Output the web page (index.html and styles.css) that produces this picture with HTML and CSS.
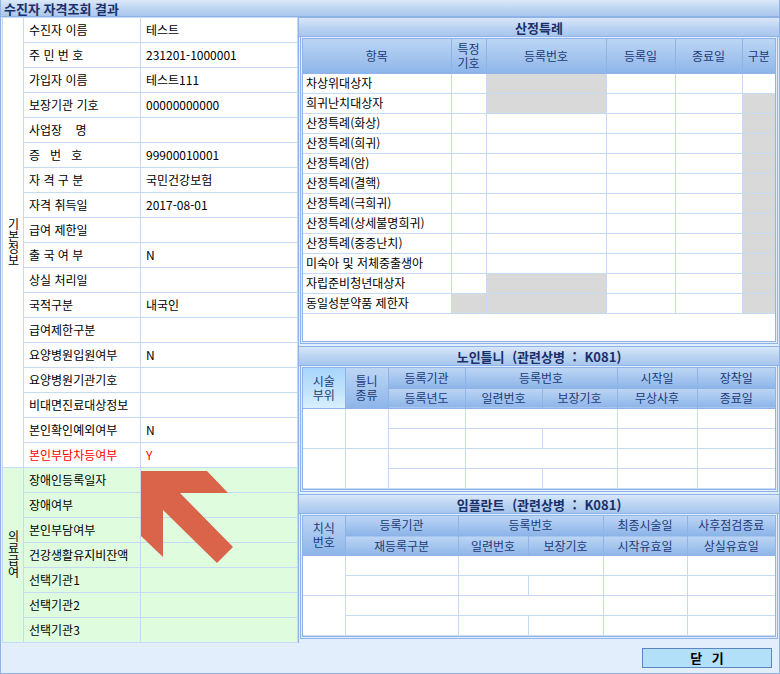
FILE: index.html
```html
<!DOCTYPE html>
<html lang="ko">
<head>
  <meta charset="UTF-8">
  <title>수진자 자격조회 결과</title>
  <link rel="stylesheet" href="styles.css">
</head>
<body>
  <div class="window">
    <div class="titlebar">수진자 자격조회 결과</div>

    <div class="main">
      <!-- 기본정보 / 의료급여 -->
      <div class="left-panel">
        <table class="info">
          <colgroup><col class="c-group"><col class="c-label"><col class="c-value"></colgroup>
          <tr><td class="group" rowspan="18"><span>기본정보</span></td><td class="label">수진자 이름</td><td>테스트</td></tr>
          <tr><td class="label">주 민 번 호</td><td>231201-1000001</td></tr>
          <tr><td class="label">가입자 이름</td><td>테스트111</td></tr>
          <tr><td class="label">보장기관 기호</td><td>00000000000</td></tr>
          <tr><td class="label">사업장&nbsp;&nbsp;&nbsp;&nbsp;명</td><td></td></tr>
          <tr><td class="label">증&nbsp;&nbsp;&nbsp;번&nbsp;&nbsp;&nbsp;호</td><td>99900010001</td></tr>
          <tr><td class="label">자 격 구 분</td><td>국민건강보험</td></tr>
          <tr><td class="label">자격 취득일</td><td>2017-08-01</td></tr>
          <tr><td class="label">급여 제한일</td><td></td></tr>
          <tr><td class="label">출 국 여 부</td><td>N</td></tr>
          <tr><td class="label">상실 처리일</td><td></td></tr>
          <tr><td class="label">국적구분</td><td>내국인</td></tr>
          <tr><td class="label">급여제한구분</td><td></td></tr>
          <tr><td class="label">요양병원입원여부</td><td>N</td></tr>
          <tr><td class="label">요양병원기관기호</td><td></td></tr>
          <tr><td class="label">비대면진료대상정보</td><td></td></tr>
          <tr><td class="label">본인확인예외여부</td><td>N</td></tr>
          <tr class="alert"><td class="label">본인부담차등여부</td><td>Y</td></tr>
          <tr class="aid"><td class="group" rowspan="7"><span>의료급여</span></td><td class="label">장애인등록일자</td><td></td></tr>
          <tr class="aid"><td class="label">장애여부</td><td></td></tr>
          <tr class="aid"><td class="label">본인부담여부</td><td></td></tr>
          <tr class="aid"><td class="label">건강생활유지비잔액</td><td></td></tr>
          <tr class="aid"><td class="label">선택기관1</td><td></td></tr>
          <tr class="aid"><td class="label">선택기관2</td><td></td></tr>
          <tr class="aid"><td class="label">선택기관3</td><td></td></tr>
        </table>
      </div>

      <div class="right-panel">
        <!-- 산정특례 -->
        <section class="sec">
          <div class="sec-head">산정특례</div>
          <div class="sec-body">
            <div class="sec-inner tall">
              <table class="grid">
                <colgroup><col style="width:148px"><col style="width:35px"><col style="width:120px"><col style="width:69px"><col style="width:67px"><col style="width:33px"></colgroup>
                <tr class="head-one">
                  <th>항목</th><th class="tight">특정<br>기호</th><th>등록번호</th><th>등록일</th><th>종료일</th><th>구분</th>
                </tr>
                <tr><td class="name">차상위대상자</td><td></td><td class="off"></td><td></td><td></td><td></td></tr>
                <tr><td class="name">희귀난치대상자</td><td></td><td class="off"></td><td></td><td></td><td class="off"></td></tr>
                <tr><td class="name">산정특례(화상)</td><td></td><td></td><td></td><td></td><td class="off"></td></tr>
                <tr><td class="name">산정특례(희귀)</td><td></td><td></td><td></td><td></td><td class="off"></td></tr>
                <tr><td class="name">산정특례(암)</td><td></td><td></td><td></td><td></td><td class="off"></td></tr>
                <tr><td class="name">산정특례(결핵)</td><td></td><td></td><td></td><td></td><td class="off"></td></tr>
                <tr><td class="name">산정특례(극희귀)</td><td></td><td></td><td></td><td></td><td class="off"></td></tr>
                <tr><td class="name">산정특례(상세불명희귀)</td><td></td><td></td><td></td><td></td><td class="off"></td></tr>
                <tr><td class="name">산정특례(중증난치)</td><td></td><td></td><td></td><td></td><td class="off"></td></tr>
                <tr><td class="name">미숙아 및 저체중출생아</td><td></td><td></td><td></td><td></td><td class="off"></td></tr>
                <tr><td class="name">자립준비청년대상자</td><td></td><td class="off"></td><td></td><td></td><td class="off"></td></tr>
                <tr><td class="name">동일성분약품 제한자</td><td class="off"></td><td class="off"></td><td></td><td></td><td class="off"></td></tr>
              </table>
            </div>
          </div>
        </section>

        <!-- 노인틀니 -->
        <section class="sec">
          <div class="sec-head">노인틀니 (관련상병 : K081)</div>
          <div class="sec-body">
            <div class="sec-inner">
              <table class="grid">
                <colgroup><col style="width:42px"><col style="width:43px"><col style="width:77px"><col style="width:77px"><col style="width:75px"><col style="width:80px"><col style="width:78px"></colgroup>
                <tr class="head-two">
                  <th rowspan="2" class="tight picked">시술<br>부위</th><th rowspan="2" class="tight">틀니<br>종류</th>
                  <th>등록기관</th><th colspan="2">등록번호</th><th>시작일</th><th>장착일</th>
                </tr>
                <tr class="head-two"><th>등록년도</th><th>일련번호</th><th>보장기호</th><th>무상사후</th><th>종료일</th></tr>
                <tr><td rowspan="2"></td><td rowspan="2"></td><td></td><td colspan="2"></td><td></td><td></td></tr>
                <tr><td></td><td></td><td></td><td></td><td></td></tr>
                <tr><td rowspan="2"></td><td rowspan="2"></td><td></td><td colspan="2"></td><td></td><td></td></tr>
                <tr><td></td><td></td><td></td><td></td><td></td></tr>
              </table>
            </div>
          </div>
        </section>

        <!-- 임플란트 -->
        <section class="sec">
          <div class="sec-head">임플란트 (관련상병 : K081)</div>
          <div class="sec-body">
            <div class="sec-inner">
              <table class="grid">
                <colgroup><col style="width:42px"><col style="width:113px"><col style="width:70px"><col style="width:75px"><col style="width:84px"><col style="width:88px"></colgroup>
                <tr class="head-two">
                  <th rowspan="2" class="tight">치식<br>번호</th>
                  <th>등록기관</th><th colspan="2">등록번호</th><th>최종시술일</th><th>사후점검종료</th>
                </tr>
                <tr class="head-two"><th>재등록구분</th><th>일련번호</th><th>보장기호</th><th>시작유효일</th><th>상실유효일</th></tr>
                <tr><td rowspan="2"></td><td></td><td colspan="2"></td><td></td><td></td></tr>
                <tr><td></td><td></td><td></td><td></td><td></td></tr>
                <tr><td rowspan="2"></td><td></td><td colspan="2"></td><td></td><td></td></tr>
                <tr><td></td><td></td><td></td><td></td><td></td></tr>
              </table>
            </div>
          </div>
        </section>
      </div>
    </div>

    <div class="footer">
      <button type="button" class="btn-close">닫 기</button>
    </div>

    <!-- pointer arrow over the table -->
    <svg class="arrow" width="780" height="674" viewBox="0 0 780 674">
      <polygon points="141,471 207,471 228,493 180,493 233,547 217,563 163,510 163,557 141,536" fill="#d9644a"/>
    </svg>
  </div>
</body>
</html>
```

FILE: styles.css
```css
/* Global */
* {
  box-sizing: border-box;
}

body {
  margin: 0;
  font-family: "Noto Sans CJK KR", "Noto Sans", sans-serif;
  font-size: 12px;
  color: #000;
  background: #e2eefb;
}

.window {
  position: relative;
  width: 780px;
  height: 674px;
  background: #e2eefb;
  border: 1px solid #8fb3e6;
  border-top: none;
  display: flex;
  flex-direction: column;
}

/* Title */
.titlebar {
  height: 17px;
  padding-left: 3px;
  line-height: 17px;
  font-size: 13px;
  font-weight: bold;
  color: #1b2f6b;
  background: linear-gradient(180deg, #dbe8f8 0%, #c2d8f3 45%, #a9c7ee 100%);
  border-bottom: 1px solid #8fb3e6;
}

.main {
  display: flex;
  padding-left: 1px;
  gap: 1px;
}

/* Left info table */
.left-panel {
  width: 295px;
}

.info {
  width: 295px;
  table-layout: fixed;
  border-collapse: collapse;
  border: 1px solid #8fb3e6;
  background: #fff;
}

.info .c-group { width: 21px; }
.info .c-label { width: 117px; }
.info .c-value { width: 157px; }

.info td {
  height: 25px;
  padding: 0 0 0 5px;
  border: 1px solid #c6dbf3;
  line-height: 14px;
  white-space: nowrap;
  overflow: hidden;
}

.info td.group {
  padding: 0;
  text-align: center;
  vertical-align: middle;
}

.info td.group span {
  display: inline-block;
  writing-mode: vertical-rl;
  text-orientation: upright;
  font-size: 12px;
  line-height: 14px;
  letter-spacing: 0;
}

.info tr.alert td {
  color: #f00;
}

.info tr.aid td {
  background: #dffcdf;
}

/* Right sections */
.right-panel {
  flex: 1;
  border-left: 1px solid #8fb3e6;
}

.sec + .sec {
  margin-top: 2px;
}

.sec-head {
  height: 20px;
  line-height: 19px;
  text-align: center;
  font-size: 13px;
  font-weight: bold;
  color: #1b2f6b;
  background: linear-gradient(180deg, #d8e7f9 0%, #bcd4f2 50%, #a7c6ed 100%);
  border-top: 1px solid #8fb3e6;
  border-bottom: 1px solid #8fb3e6;
  word-spacing: 4px;
}

.sec-body {
  margin: 0 1px;
  padding: 1px;
  border: 1px solid #8fb3e6;
  border-top: none;
}

.sec-inner {
  border: 1px solid #8fb3e6;
  background: #fff;
}

.sec-inner.tall {
  height: 304px;
}

.grid {
  width: 100%;
  table-layout: fixed;
  border-collapse: collapse;
}

.grid th {
  font-weight: normal;
  color: #1d3a78;
  text-align: center;
  border: 1px solid #8fb3e6;
  border-top: none;
  background: linear-gradient(180deg, #bcd5f4 0%, #a3c4ee 55%, #8db5e9 100%);
  padding: 0;
  line-height: 14px;
  white-space: nowrap;
}

.grid tr.head-one th {
  height: 34px;
}

.grid tr.head-two th {
  height: 20px;
}

.grid th.tight {
  line-height: 14px;
}

.grid th.picked {
  background: linear-gradient(180deg, #a7d5fb 0%, #c3e3fc 60%, #d8effd 100%);
}

.grid td {
  height: 20px;
  padding: 0 0 0 3px;
  border: 1px solid #c6dbf3;
  white-space: nowrap;
  overflow: hidden;
  line-height: 14px;
}

.grid td.off {
  background: #d9d9d9;
}

.grid td:first-child,
.grid th:first-child {
  border-left: none;
}

.grid td:last-child,
.grid th:last-child {
  border-right: none;
}

/* Footer */
.footer {
  flex: 1;
  display: flex;
  justify-content: flex-end;
  align-items: flex-start;
  padding: 5px 7px 0 0;
}

.btn-close {
  width: 130px;
  height: 20px;
  padding: 0;
  font-family: inherit;
  font-size: 13px;
  font-weight: bold;
  line-height: 18px;
  color: #000;
  background: #b3e0f9;
  border: 1px solid #5b86c4;
  word-spacing: 6px;
}

/* Overlay arrow */
.arrow {
  position: absolute;
  left: -1px;
  top: 0;
  pointer-events: none;
}
```
